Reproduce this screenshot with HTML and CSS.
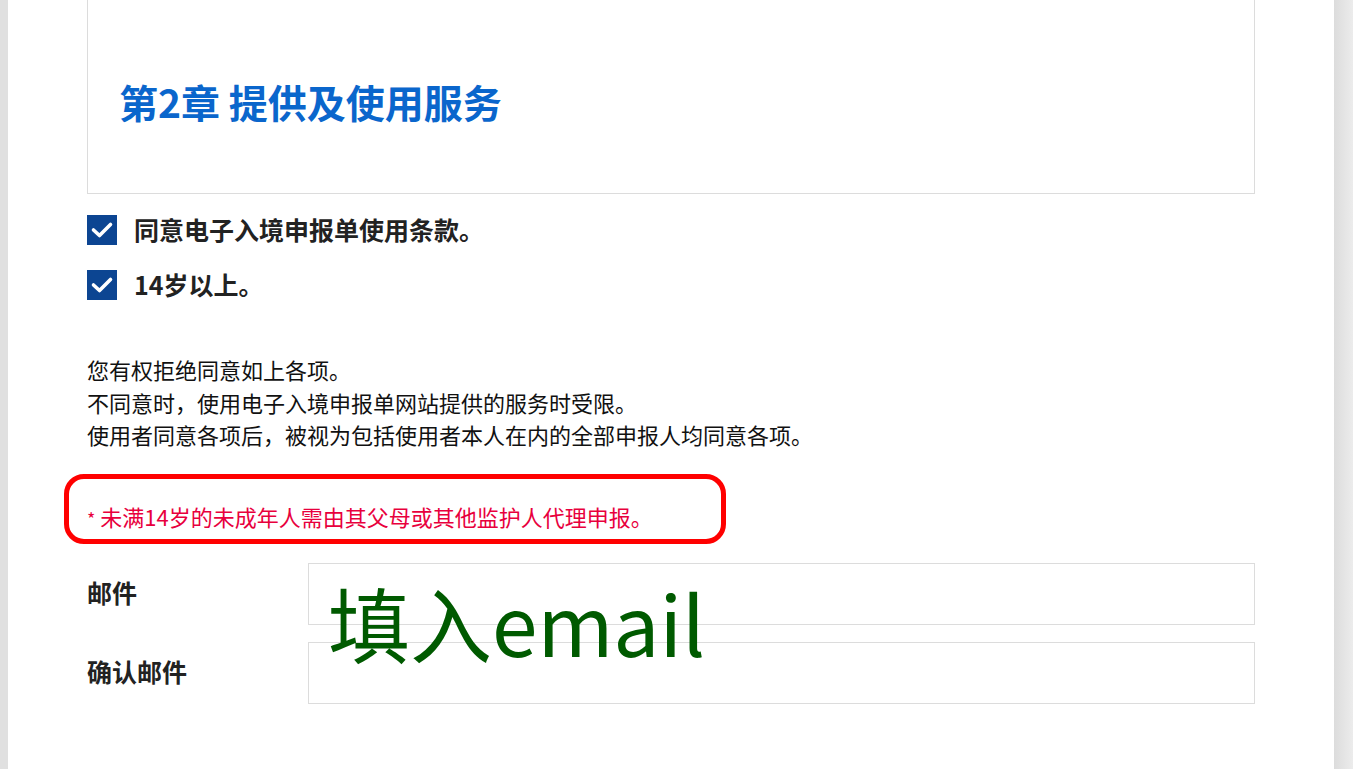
FILE: index.html
```html
<!DOCTYPE html>
<html lang="zh-CN">
<head>
    <meta charset="UTF-8">
    <meta name="viewport" content="width=device-width, initial-scale=1.0">
    <title>电子入境申报单</title>
    <link rel="stylesheet" href="styles.css">
</head>
<body>
    <div class="side side-left"></div>
    <div class="page">
        <div class="content">
            <div class="chapter">
                <h2>第2章 提供及使用服务</h2>
            </div>

            <div class="agree-list">
                <label class="agree"><span class="check"><svg viewBox="0 0 30 30" width="30" height="30"><path d="M6.5 15 L12.5 20.5 L23.5 9.5" fill="none" stroke="#fff" stroke-width="3.6" stroke-linecap="round" stroke-linejoin="round"/></svg></span><span class="agree-text">同意电子入境申报单使用条款。</span></label>
                <label class="agree"><span class="check"><svg viewBox="0 0 30 30" width="30" height="30"><path d="M6.5 15 L12.5 20.5 L23.5 9.5" fill="none" stroke="#fff" stroke-width="3.6" stroke-linecap="round" stroke-linejoin="round"/></svg></span><span class="agree-text">14岁以上。</span></label>
            </div>

            <p class="notice">
                您有权拒绝同意如上各项。<br>
                不同意时，使用电子入境申报单网站提供的服务时受限。<br>
                使用者同意各项后，被视为包括使用者本人在内的全部申报人均同意各项。
            </p>

            <p class="minor-note"><span class="star">*</span> 未满14岁的未成年人需由其父母或其他监护人代理申报。<span class="mark-box"></span></p>

            <div class="email-form">
                <div class="form-row">
                    <span class="form-label">邮件</span>
                    <input type="text" class="form-input">
                </div>
                <div class="form-row">
                    <span class="form-label">确认邮件</span>
                    <input type="text" class="form-input">
                </div>
                <div class="hint">填入email</div>
            </div>
        </div>
    </div>
    <div class="side side-right"></div>
</body>
</html>
```

FILE: styles.css
```css
:root {
    --blue-title: #0a66cc;
    --navy: #0c4592;
    --text: #222;
    --line: #dcdcdc;
    --red-note: #e8003d;
    --mark-red: #ff0000;
    --hint-green: #005a00;
}

* {
    box-sizing: border-box;
}

body {
    margin: 0;
    display: flex;
    height: 100vh;
    overflow: hidden;
    background: #fff;
    color: var(--text);
    font-family: "Noto Sans CJK SC", "Noto Sans", sans-serif;
}

.side-left {
    width: 8px;
    background: #e0e0e0;
}

.side-right {
    width: 19px;
    background: linear-gradient(90deg, #dcdcdc, #ececec);
}

.page {
    flex: 1;
}

.content {
    width: 1168px;
    margin-left: 79px;
    display: flex;
    flex-direction: column;
}

.chapter {
    height: 194px;
    border: 1px solid var(--line);
    border-top: none;
    padding: 0 0 0 31px;
    display: flex;
    align-items: center;
}

.chapter h2 {
    margin: 8px 0 0;
    font-size: 39px;
    font-weight: 700;
    color: var(--blue-title);
}

.agree-list {
    margin-top: 21px;
    display: flex;
    flex-direction: column;
    gap: 25px;
}

.agree {
    display: flex;
    align-items: center;
    gap: 17px;
    height: 30px;
    font-size: 25px;
    font-weight: 700;
    line-height: 30px;
}

.agree-text {
    margin-top: -3px;
}

.check {
    width: 30px;
    height: 30px;
    background: var(--navy);
    display: flex;
}

.notice {
    margin: 53px 0 0;
    font-size: 22px;
    line-height: 32.5px;
    color: #111;
}

.minor-note {
    position: relative;
    margin: 49px 0 0;
    font-size: 22px;
    line-height: 32.5px;
    color: var(--red-note);
}

.star {
    font-size: 18px;
}

.mark-box {
    position: absolute;
    left: -23px;
    top: -26px;
    width: 662px;
    height: 70px;
    border: 5px solid var(--mark-red);
    border-radius: 20px;
}

.email-form {
    position: relative;
    margin-top: 29px;
    display: flex;
    flex-direction: column;
    gap: 17px;
}

.form-row {
    display: flex;
    align-items: center;
}

.form-label {
    width: 221px;
    font-size: 25px;
    font-weight: 700;
    margin-top: -4px;
}

.form-input {
    flex: 1;
    height: 62px;
    border: 1px solid var(--line);
    outline: none;
    font-size: 20px;
    padding: 0 16px;
}

.hint {
    position: absolute;
    left: 241px;
    top: 18px;
    font-size: 82px;
    line-height: 1;
    color: var(--hint-green);
    pointer-events: none;
}
```
